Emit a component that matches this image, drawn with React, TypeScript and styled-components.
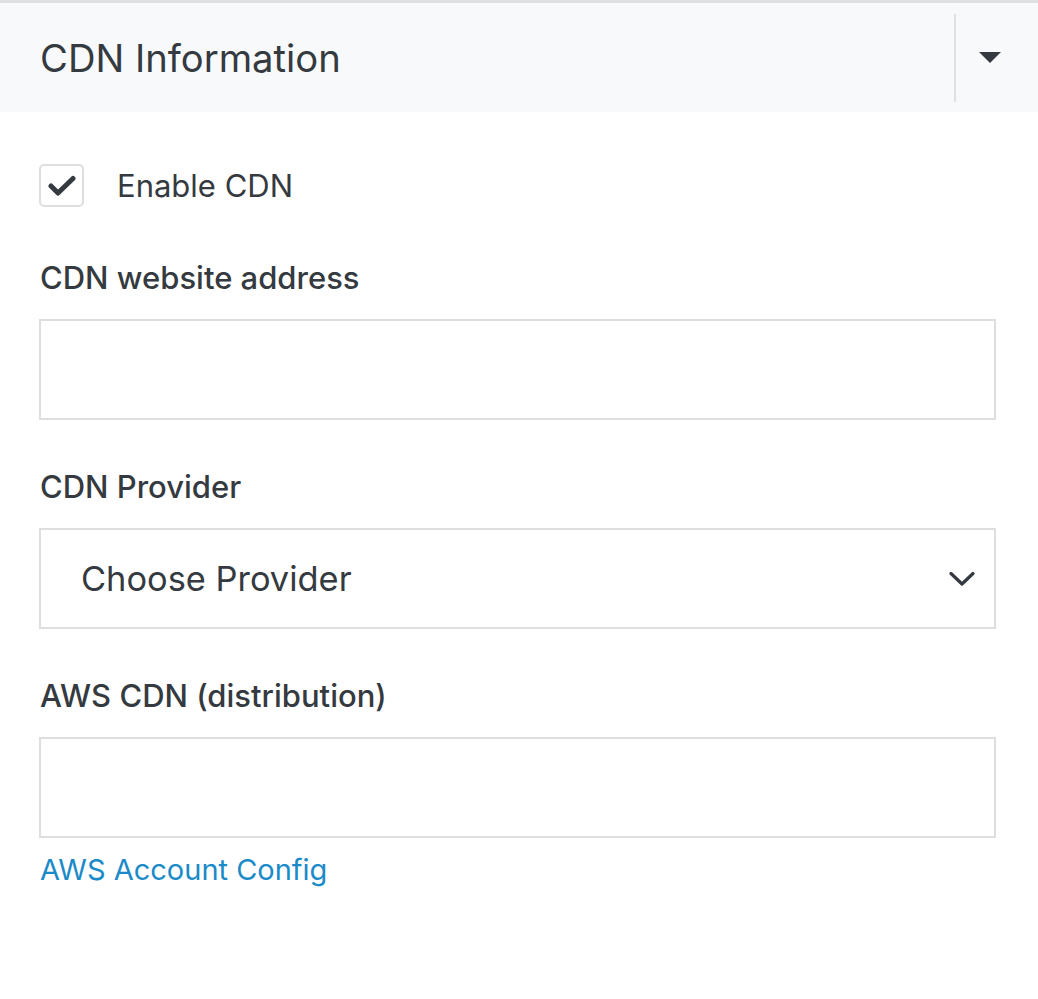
import React from "react";
import styled, { createGlobalStyle } from "styled-components";

const Global = createGlobalStyle`
  html, body { margin: 0; padding: 0; background: #fff; }
  body { font-family: Inter, "Noto Sans", sans-serif; color: #343a40; }
`;

const Panel = styled.section`
  width: 1038px;
  border-top: 3px solid #e0e0e0;
`;

const Header = styled.header`
  height: 109px;
  background: #f8f9fa;
  display: flex;
  align-items: center;
  padding: 0 14px 0 40px;
  box-sizing: border-box;
`;

const Title = styled.h2`
  flex: 1;
  margin: 0;
  font-size: 38.2px;
  font-weight: 400;
  color: #343a40;
`;

const Toggle = styled.button`
  width: 70px;
  height: 88px;
  border: none;
  border-left: 2px solid #e0e0e0;
  background: transparent;
  display: flex;
  align-items: center;
  justify-content: center;
  padding: 0;
`;

const Body = styled.div`
  padding: 52px 42px 0 40px;
  display: flex;
  flex-direction: column;
`;

const CheckRow = styled.label`
  display: flex;
  align-items: center;
  gap: 33px;
  font-size: 31px;
  color: #343a40;
  margin-bottom: 52px;
`;

const Box = styled.span`
  width: 45px;
  height: 43px;
  box-sizing: border-box;
  border: 2px solid #dedede;
  border-radius: 5px;
  display: flex;
  align-items: center;
  justify-content: center;
  margin-left: -1px;
`;

const Field = styled.div`
  display: flex;
  flex-direction: column;
  margin-bottom: 48px;
`;

const Label = styled.label`
  font-size: 31px;
  font-weight: 500;
  color: #343a40;
  line-height: 38px;
  margin-bottom: 22px;
`;

const Input = styled.input`
  height: 101px;
  box-sizing: border-box;
  border: 2px solid #dedede;
  border-radius: 0;
  margin-left: -1px;
  width: 957px;
  font-family: inherit;
  font-size: 34px;
  padding: 0 40px;
  outline: none;
`;

const Select = styled.div`
  height: 101px;
  box-sizing: border-box;
  border: 2px solid #dedede;
  margin-left: -1px;
  width: 957px;
  display: flex;
  align-items: center;
  justify-content: space-between;
  padding: 0 19px 0 40px;
  font-size: 34.4px;
  color: #343a40;
`;

const Link = styled.a`
  color: #1a8ac8;
  font-size: 29px;
  text-decoration: none;
  margin-top: 14px;
`;

const AwsField = styled(Field)`
  margin-bottom: 0;
`;

export default function App() {
  return (
    <>
      <Global />
      <Panel>
        <Header>
          <Title>CDN Information</Title>
          <Toggle aria-label="collapse">
            <svg width="22" height="12" viewBox="0 0 22 12">
              <path d="M0 0 H22 L11 11 Z" fill="#343a40" />
            </svg>
          </Toggle>
        </Header>
        <Body>
          <CheckRow>
            <Box>
              <svg width="28" height="22" viewBox="0 0 28 22">
                <path d="M3 11 L10 18 L25 3.5" fill="none" stroke="#343a40" strokeWidth="5" strokeLinecap="round" strokeLinejoin="round" />
              </svg>
            </Box>
            Enable CDN
          </CheckRow>
          <Field>
            <Label>CDN website address</Label>
            <Input />
          </Field>
          <Field>
            <Label>CDN Provider</Label>
            <Select>
              <span>Choose Provider</span>
              <svg width="26" height="16" viewBox="0 0 26 16">
                <path d="M2 2.5 L13 13 L24 2.5" fill="none" stroke="#343a40" strokeWidth="3.2" strokeLinecap="round" strokeLinejoin="round" />
              </svg>
            </Select>
          </Field>
          <AwsField>
            <Label>AWS CDN (distribution)</Label>
            <Input />
            <Link href="#">AWS Account Config</Link>
          </AwsField>
        </Body>
      </Panel>
    </>
  );
}
